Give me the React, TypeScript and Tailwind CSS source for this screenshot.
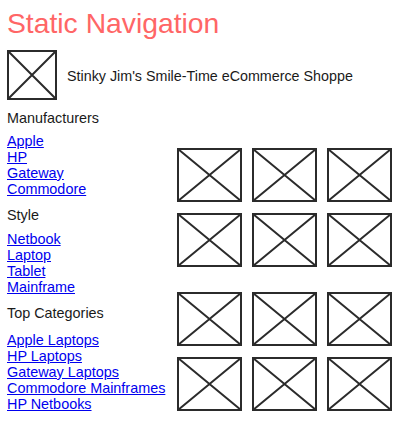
const manufacturers = ["Apple", "HP", "Gateway", "Commodore"];
const styles = ["Netbook", "Laptop", "Tablet", "Mainframe"];
const categories = ["Apple Laptops", "HP Laptops", "Gateway Laptops", "Commodore Mainframes", "HP Netbooks"];

function Placeholder({ className }: { className: string }) {
  return (
    <svg viewBox="0 0 65 54" preserveAspectRatio="none" className={className}>
      <rect x="1" y="1" width="63" height="52" fill="white" stroke="#2b2b2b" strokeWidth="2" />
      <path d="M1 1L64 53M64 1L1 53" stroke="#2b2b2b" strokeWidth="2" fill="none" />
    </svg>
  );
}

function NavGroup({ title, links, gap }: { title: string; links: string[]; gap: string }) {
  return (
    <div>
      <h2 className={`text-[14.4px] leading-4 text-[#1a1a1a] ${gap}`}>{title}</h2>
      <ul className="text-[14.4px] leading-4 mb-[10px]">
        {links.map((l) => (
          <li key={l}>
            <a href="#" className="text-[#0000ee] underline">
              {l}
            </a>
          </li>
        ))}
      </ul>
    </div>
  );
}

function ImageRow() {
  return (
    <div className="flex gap-[10px]">
      <Placeholder className="w-[65px] h-[54px]" />
      <Placeholder className="w-[65px] h-[54px]" />
      <Placeholder className="w-[65px] h-[54px]" />
    </div>
  );
}

export default function App() {
  return (
    <div className="w-[410px] h-[422px] overflow-hidden bg-white px-[7px] pt-[7px] font-['Liberation_Sans',Arial,sans-serif]">
      <h1 className="text-[28.3px] leading-8 text-[#ff6666]">Static Navigation</h1>

      <div className="mt-[11px] flex items-center gap-[10px]">
        <svg viewBox="0 0 50 50" className="w-[50px] h-[50px]">
          <rect x="1" y="1" width="48" height="48" fill="white" stroke="#2b2b2b" strokeWidth="2" />
          <path d="M1 1L49 49M49 1L1 49" stroke="#2b2b2b" strokeWidth="2" fill="none" />
        </svg>
        <p className="pt-[3px] text-[14.3px] text-[#1a1a1a]">Stinky Jim's Smile-Time eCommerce Shoppe</p>
      </div>

      <div className="mt-[10px] flex">
        <div className="w-[170px] shrink-0">
          <NavGroup title="Manufacturers" links={manufacturers} gap="mb-[7px]" />
          <NavGroup title="Style" links={styles} gap="mb-[8px]" />
          <NavGroup title="Top Categories" links={categories} gap="mb-[11px]" />
        </div>
        <div className="flex flex-col pt-[38px]">
          <div className="flex flex-col gap-[11px]">
            <ImageRow />
            <ImageRow />
          </div>
          <div className="mt-[25px] flex flex-col gap-[11px]">
            <ImageRow />
            <ImageRow />
          </div>
        </div>
      </div>
    </div>
  );
}
